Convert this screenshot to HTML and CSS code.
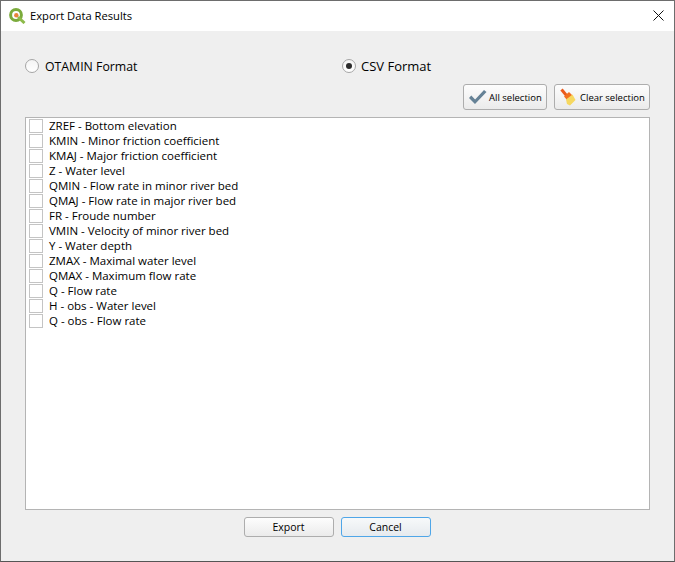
FILE: index.html
```html
<!DOCTYPE html>
<html lang="en">
<head>
<meta charset="utf-8">
<title>Export Data Results</title>
<link rel="stylesheet" href="styles.css">
</head>
<body>
<div class="window">
  <header class="titlebar">
    <svg class="app-icon" width="17" height="16" viewBox="0 0 17 16">
      <circle cx="7" cy="7" r="5.4" fill="none" stroke="#7bab3c" stroke-width="3"/>
      <path d="M9 9l6.500 6" stroke="#8dba4a" stroke-width="3" fill="none"/>
      <circle cx="7.300" cy="7.300" r="2.200" fill="#e8843a"/>
    </svg>
    <span class="title">Export Data Results</span>
    <svg class="close" width="11" height="11" viewBox="0 0 11 11">
      <path d="M.5.5l10 10M10.500.5l-10 10" stroke="#111" stroke-width="1" fill="none"/>
    </svg>
  </header>
  <main class="content">
    <div class="formats">
      <label class="radio-item otamin"><span class="radio"></span>OTAMIN Format</label>
      <label class="radio-item csv"><span class="radio checked"></span>CSV Format</label>
    </div>
    <div class="tools">
      <button class="btn tool tool-all">
        <svg width="20" height="20" viewBox="0 0 20 20"><path d="M1 11l2.300-2.600 3.800 4L16 3l2.500 2L7 17z" fill="#668296"/></svg>
        All selection
      </button>
      <button class="btn tool tool-clear">
        <svg width="20" height="20" viewBox="0 0 20 20">
          <path d="M2.500 2.500l5 6" stroke="#ea5a1c" stroke-width="3" fill="none"/>
          <path d="M5 9.500L10 5l3.500 3.500L8 13z" fill="#f2701f"/>
          <path d="M7 12.500l6.500-5L16.500 13 11 18.500 8 17z" fill="#f6d860"/>
        </svg>
        Clear selection
      </button>
    </div>
    <ul class="list">
      <li class="row"><span class="box"></span>ZREF - Bottom elevation</li>
      <li class="row"><span class="box"></span>KMIN - Minor friction coefficient</li>
      <li class="row"><span class="box"></span>KMAJ - Major friction coefficient</li>
      <li class="row"><span class="box"></span>Z - Water level</li>
      <li class="row"><span class="box"></span>QMIN - Flow rate in minor river bed</li>
      <li class="row"><span class="box"></span>QMAJ - Flow rate in major river bed</li>
      <li class="row"><span class="box"></span>FR - Froude number</li>
      <li class="row"><span class="box"></span>VMIN - Velocity of minor river bed</li>
      <li class="row"><span class="box"></span>Y - Water depth</li>
      <li class="row"><span class="box"></span>ZMAX - Maximal water level</li>
      <li class="row"><span class="box"></span>QMAX - Maximum flow rate</li>
      <li class="row"><span class="box"></span>Q - Flow rate</li>
      <li class="row"><span class="box"></span>H - obs - Water level</li>
      <li class="row"><span class="box"></span>Q - obs - Flow rate</li>
    </ul>
    <div class="actions">
      <button class="btn action">Export</button>
      <button class="btn action default">Cancel</button>
    </div>
  </main>
</div>
</body>
</html>
```
FILE: styles.css
```css
* { box-sizing: border-box; }
html, body { margin: 0; height: 100%; }
body { font-family: "Open Sans", "Noto Sans", sans-serif; font-size: 11.5px; color: #000; }
.window {
  width: 675px; height: 562px;
  display: flex; flex-direction: column;
  border: 1px solid #6d6d6d; border-bottom-color: #555;
  background: #efefef;
}
.titlebar {
  height: 30px; background: #fff;
  display: flex; align-items: center;
  padding: 0 10px 0 8px;
  flex: none;
}
.app-icon { margin-right: 4px; }
.title { flex: 1; font-size: 11.2px; margin-bottom: 2px; }
.close { margin-bottom: 1px; }
.content {
  flex: 1; display: flex; flex-direction: column;
  padding: 0 24px;
}
.formats { display: flex; height: 53px; padding-top: 26px; flex: none; }
.radio-item { display: flex; align-items: center; height: 18px; gap: 6px; }
.otamin { width: 317px; font-size: 12.3px; }
.csv { font-size: 13px; gap: 5px; }
.radio {
  width: 14px; height: 14px; border-radius: 50%;
  border: 1px solid #a6a6a6; background: linear-gradient(#f4f4f4, #fff);
  display: flex; align-items: center; justify-content: center;
}
.radio.checked::after { content: ""; width: 6px; height: 6px; border-radius: 50%; background: #2c2c2c; }
.tools { display: flex; justify-content: flex-end; gap: 7px; height: 33px; flex: none; }
.btn {
  font: inherit; color: #000;
  border: 1px solid #adadad; border-radius: 3px;
  background: linear-gradient(#fdfdfd, #ebebeb);
  padding: 0;
}
.tool { height: 26px; display: flex; align-items: center; font-size: 9.5px; padding: 0 0 0 4px; gap: 1px; white-space: nowrap; }
.tool-all { width: 84px; }
.tool-clear { width: 96px; }
.list {
  list-style: none; margin: 0; padding: 0 0 0 3px;
  height: 393px; flex: none;
  background: #fff; border: 1px solid #b4b4b4;
}
.row { height: 15px; display: flex; align-items: center; gap: 6px; white-space: nowrap; }
.box { width: 14px; height: 14px; border: 1px solid #c4c4c4; background: #fff; flex: none; }
.actions { display: flex; justify-content: center; gap: 7px; padding-top: 7px; padding-right: 1px; }
.action { width: 90px; height: 20px; font-size: 10.5px; }
.default { border-color: #4fa6e8; background: linear-gradient(#f7f9fa, #e6eaee); }
```
